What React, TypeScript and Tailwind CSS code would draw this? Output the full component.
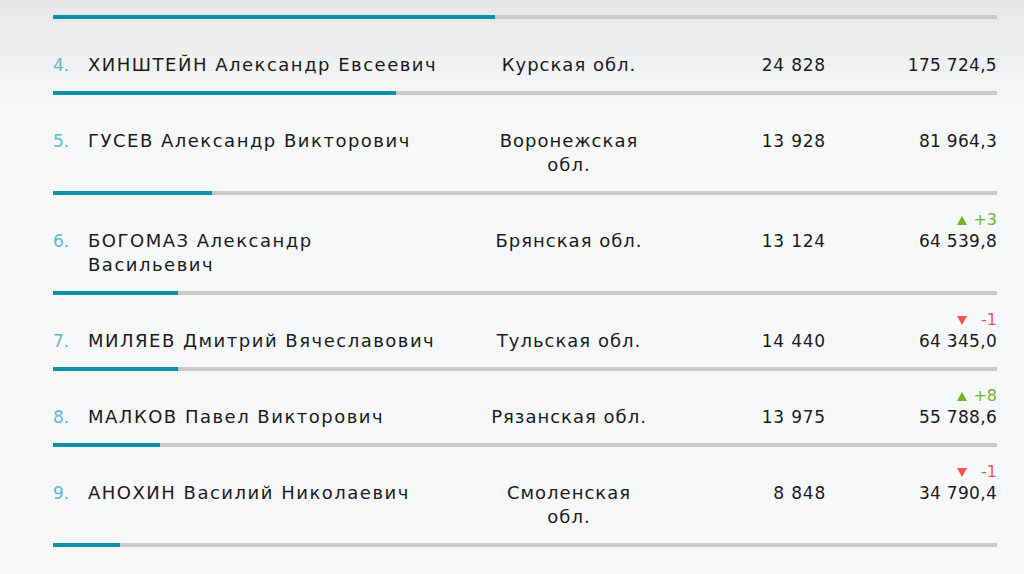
import React from "react";

type Row = {
  n: number;
  name: string[];
  region: string[];
  votes: string;
  value: string;
  delta?: { dir: "up" | "down"; text: string };
  bar: number;
};

const rows: Row[] = [
  { n: 4, name: ["ХИНШТЕЙН Александр Евсеевич"], region: ["Курская обл."], votes: "24 828", value: "175 724,5", bar: 343 },
  { n: 5, name: ["ГУСЕВ Александр Викторович"], region: ["Воронежская", "обл."], votes: "13 928", value: "81 964,3", bar: 159 },
  { n: 6, name: ["БОГОМАЗ Александр", "Васильевич"], region: ["Брянская обл."], votes: "13 124", value: "64 539,8", delta: { dir: "up", text: "+3" }, bar: 125 },
  { n: 7, name: ["МИЛЯЕВ Дмитрий Вячеславович"], region: ["Тульская обл."], votes: "14 440", value: "64 345,0", delta: { dir: "down", text: "-1" }, bar: 125 },
  { n: 8, name: ["МАЛКОВ Павел Викторович"], region: ["Рязанская обл."], votes: "13 975", value: "55 788,6", delta: { dir: "up", text: "+8" }, bar: 107 },
  { n: 9, name: ["АНОХИН Василий Николаевич"], region: ["Смоленская", "обл."], votes: "8 848", value: "34 790,4", delta: { dir: "down", text: "-1" }, bar: 67 },
];

const Bar = ({ width }: { width: number }) => (
  <div className="h-[4px] w-full bg-[#c9c9c9]">
    <div className="h-full bg-[#0692a8]" style={{ width }} />
  </div>
);

const Delta = ({ dir, text }: { dir: "up" | "down"; text: string }) => (
  <div
    className={`absolute right-0 bottom-full flex items-center gap-[6px] text-[16px] leading-[18px] tracking-normal ${
      dir === "up" ? "text-[#6cb52d]" : "text-[#f4524d]"
    }`}
  >
    <svg width="10" height="9" viewBox="0 0 10 9">
      {dir === "up" ? (
        <polygon points="5,0 10,9 0,9" fill="#6cb52d" />
      ) : (
        <polygon points="0,0 10,0 5,9" fill="#f4524d" />
      )}
    </svg>
    <span className="w-[24px] text-right">{text}</span>
  </div>
);

export default function App() {
  return (
    <div
      className="min-h-[574px] w-[1024px] bg-[linear-gradient(to_bottom,#e6e7e9_0px,#f7f8fa_110px)] text-[17px] leading-[24px] text-[#1a1a1a]"
      style={{ fontFamily: '"DejaVu Sans", "Liberation Sans", sans-serif' }}
    >
      <div className="ml-[53px] w-[944px] pt-[15px]">
        <Bar width={442} />
        {rows.map((r) => (
          <div key={r.n}>
            <div className="grid grid-cols-[431px_170px_172px_171px] pt-[34px] pb-[14px]">
              <div className="flex">
                <span className="w-[35px] text-[#5ab9cf]">{r.n}.</span>
                <div className="text-[18px] tracking-[1.5px]">
                  {r.name.map((l) => (
                    <div key={l}>{l}</div>
                  ))}
                </div>
              </div>
              <div className="text-center text-[18px] tracking-[1px]">
                {r.region.map((l) => (
                  <div key={l}>{l}</div>
                ))}
              </div>
              <div className="text-right tracking-[0.8px]">{r.votes}</div>
              <div className="text-right tracking-[0.3px]">
                <span className="relative inline-block">
                  {r.delta && <Delta dir={r.delta.dir} text={r.delta.text} />}
                  {r.value}
                </span>
              </div>
            </div>
            <Bar width={r.bar} />
          </div>
        ))}
      </div>
    </div>
  );
}
